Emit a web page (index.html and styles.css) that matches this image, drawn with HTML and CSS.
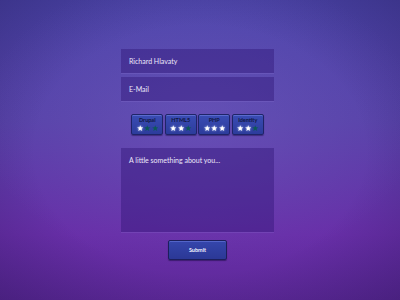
FILE: index.html
```html
<!DOCTYPE html>
<html lang="en">
<head>
    <meta charset="UTF-8">
    <meta name="viewport" content="width=device-width, initial-scale=1.0">
    <title>Profile form</title>
    <link rel="stylesheet" href="styles.css">
</head>
<body>
    <svg width="0" height="0" style="position:absolute">
        <defs>
            <polygon id="star" points="5,0.3 6.2,3.6 9.8,3.7 7,5.9 8,9.4 5,7.4 2,9.4 3,5.9 0.2,3.7 3.8,3.6"/>
        </defs>
    </svg>
    <div class="page">
        <form class="profile" onsubmit="event.preventDefault();" autocomplete="off">
            <div class="field">Richard Hlavaty</div>
            <div class="field">E-Mail</div>

            <div class="skills">
                <div class="skill">
                    <span class="skill_name">Drupal</span>
                    <span class="stars">
                        <svg class="star on" viewBox="0 0 10 10"><use href="#star"/></svg>
                        <svg class="star" viewBox="0 0 10 10"><use href="#star"/></svg>
                        <svg class="star" viewBox="0 0 10 10"><use href="#star"/></svg>
                    </span>
                </div>
                <div class="skill">
                    <span class="skill_name">HTML5</span>
                    <span class="stars">
                        <svg class="star on" viewBox="0 0 10 10"><use href="#star"/></svg>
                        <svg class="star on" viewBox="0 0 10 10"><use href="#star"/></svg>
                        <svg class="star" viewBox="0 0 10 10"><use href="#star"/></svg>
                    </span>
                </div>
                <div class="skill">
                    <span class="skill_name">PHP</span>
                    <span class="stars">
                        <svg class="star on" viewBox="0 0 10 10"><use href="#star"/></svg>
                        <svg class="star on" viewBox="0 0 10 10"><use href="#star"/></svg>
                        <svg class="star on" viewBox="0 0 10 10"><use href="#star"/></svg>
                    </span>
                </div>
                <div class="skill">
                    <span class="skill_name">Identity</span>
                    <span class="stars">
                        <svg class="star on" viewBox="0 0 10 10"><use href="#star"/></svg>
                        <svg class="star on" viewBox="0 0 10 10"><use href="#star"/></svg>
                        <svg class="star" viewBox="0 0 10 10"><use href="#star"/></svg>
                    </span>
                </div>
            </div>

            <div class="field about">A little something about you...</div>

            <div class="actions">
                <button type="submit" class="button">Submit</button>
            </div>
        </form>
    </div>
</body>
</html>
```

FILE: styles.css
```css
html, body{
  margin:0;
  height:100%;
}
body{
  font-family:"Lato", "Open Sans", sans-serif;
  background:
    radial-gradient(ellipse 55% 50% at 50% 40%, rgba(125,105,205,0.35), rgba(125,105,205,0) 100%),
    radial-gradient(ellipse 75% 75% at 50% 50%, rgba(20,10,60,0) 55%, rgba(20,10,60,0.32) 100%),
    linear-gradient(#4c45aa, #5742a8 40%, #682fa8 78%, #5e299a);
}
.page{
  width:400px;
  height:300px;
  overflow:hidden;
}
.profile{
  width:153px;
  margin:0 0 0 121px;
  padding-top:49px;
  display:flex;
  flex-direction:column;
}
.field{
  height:24px;
  margin-bottom:4px;
  padding:0 8px;
  display:flex;
  align-items:center;
  box-sizing:border-box;
  background:rgba(45,18,115,0.4);
  box-shadow:0 1px 0 rgba(160,140,230,0.18);
  color:#ece8fa;
  font-size:7px;
}
.skills{
  display:flex;
  justify-content:center;
  gap:1.5px;
  margin:9px 0 13px;
}
.skill{
  width:32px;
  height:21px;
  box-sizing:border-box;
  border:1px solid #1f2468;
  border-radius:2px;
  background:linear-gradient(#3a4cb4, #2c3c9c);
  box-shadow:inset 0 1px 0 rgba(150,170,255,0.35), 0 1px 1px rgba(20,10,60,0.45);
  display:flex;
  flex-direction:column;
  align-items:center;
  padding-top:2px;
}
.skill_name{
  font-size:5.5px;
  font-weight:bold;
  color:#0f1640;
  line-height:7px;
}
.stars{
  display:flex;
  justify-content:center;
  gap:1px;
  margin-top:1px;
}
.star{
  width:6.5px;
  height:6.5px;
  fill:#0c5a56;
}
.star.on{
  fill:#ffffff;
  filter:drop-shadow(0 0 1px rgba(200,215,255,0.9));
}
.about{
  height:84px;
  align-items:flex-start;
  padding-top:8px;
  margin-bottom:8px;
}
.actions{
  display:flex;
  justify-content:center;
}
.button{
  width:59px;
  height:20px;
  border:1px solid #1c1f5c;
  border-radius:2px;
  background:linear-gradient(#3546ac, #2b3896);
  box-shadow:inset 0 1px 0 rgba(140,160,255,0.35), 0 1px 1px rgba(20,10,60,0.5);
  color:#f2f0ff;
  font-family:"Lato", sans-serif;
  font-size:5.5px;
  font-weight:bold;
  padding:0;
}
```
